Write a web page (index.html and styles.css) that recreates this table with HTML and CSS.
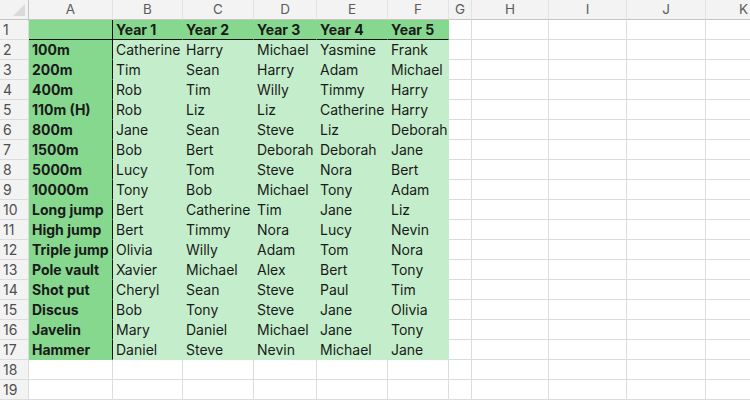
FILE: index.html
```html
<!DOCTYPE html>
<html>
<head>
<meta charset="utf-8">
<link rel="stylesheet" href="styles.css">
</head>
<body>
<table class="sheet">
<colgroup>
<col class="c-rh"><col class="c-a"><col class="c-b"><col class="c-c"><col class="c-d"><col class="c-e"><col class="c-f"><col class="c-g"><col class="c-h"><col class="c-i"><col class="c-j"><col class="c-k">
</colgroup>
<thead>
<tr class="colhead"><th class="corner"><span class="tri"></span></th><th>A</th><th>B</th><th>C</th><th>D</th><th>E</th><th>F</th><th>G</th><th>H</th><th>I</th><th>J</th><th>K</th></tr>
</thead>
<tbody>
<tr><th>1</th><td class="ev hd"></td><td class="hd top">Year 1</td><td class="hd top">Year 2</td><td class="hd top">Year 3</td><td class="hd top">Year 4</td><td class="hd top">Year 5</td><td></td><td></td><td></td><td></td><td></td></tr>
<tr><th>2</th><td class="ev">100m</td><td class="d">Catherine</td><td class="d">Harry</td><td class="d">Michael</td><td class="d">Yasmine</td><td class="d">Frank</td><td></td><td></td><td></td><td></td><td></td></tr>
<tr><th>3</th><td class="ev">200m</td><td class="d">Tim</td><td class="d">Sean</td><td class="d">Harry</td><td class="d">Adam</td><td class="d">Michael</td><td></td><td></td><td></td><td></td><td></td></tr>
<tr><th>4</th><td class="ev">400m</td><td class="d">Rob</td><td class="d">Tim</td><td class="d">Willy</td><td class="d">Timmy</td><td class="d">Harry</td><td></td><td></td><td></td><td></td><td></td></tr>
<tr><th>5</th><td class="ev">110m (H)</td><td class="d">Rob</td><td class="d">Liz</td><td class="d">Liz</td><td class="d">Catherine</td><td class="d">Harry</td><td></td><td></td><td></td><td></td><td></td></tr>
<tr><th>6</th><td class="ev">800m</td><td class="d">Jane</td><td class="d">Sean</td><td class="d">Steve</td><td class="d">Liz</td><td class="d">Deborah</td><td></td><td></td><td></td><td></td><td></td></tr>
<tr><th>7</th><td class="ev">1500m</td><td class="d">Bob</td><td class="d">Bert</td><td class="d">Deborah</td><td class="d">Deborah</td><td class="d">Jane</td><td></td><td></td><td></td><td></td><td></td></tr>
<tr><th>8</th><td class="ev">5000m</td><td class="d">Lucy</td><td class="d">Tom</td><td class="d">Steve</td><td class="d">Nora</td><td class="d">Bert</td><td></td><td></td><td></td><td></td><td></td></tr>
<tr><th>9</th><td class="ev">10000m</td><td class="d">Tony</td><td class="d">Bob</td><td class="d">Michael</td><td class="d">Tony</td><td class="d">Adam</td><td></td><td></td><td></td><td></td><td></td></tr>
<tr><th>10</th><td class="ev">Long jump</td><td class="d">Bert</td><td class="d">Catherine</td><td class="d">Tim</td><td class="d">Jane</td><td class="d">Liz</td><td></td><td></td><td></td><td></td><td></td></tr>
<tr><th>11</th><td class="ev">High jump</td><td class="d">Bert</td><td class="d">Timmy</td><td class="d">Nora</td><td class="d">Lucy</td><td class="d">Nevin</td><td></td><td></td><td></td><td></td><td></td></tr>
<tr><th>12</th><td class="ev">Triple jump</td><td class="d">Olivia</td><td class="d">Willy</td><td class="d">Adam</td><td class="d">Tom</td><td class="d">Nora</td><td></td><td></td><td></td><td></td><td></td></tr>
<tr><th>13</th><td class="ev">Pole vault</td><td class="d">Xavier</td><td class="d">Michael</td><td class="d">Alex</td><td class="d">Bert</td><td class="d">Tony</td><td></td><td></td><td></td><td></td><td></td></tr>
<tr><th>14</th><td class="ev">Shot put</td><td class="d">Cheryl</td><td class="d">Sean</td><td class="d">Steve</td><td class="d">Paul</td><td class="d">Tim</td><td></td><td></td><td></td><td></td><td></td></tr>
<tr><th>15</th><td class="ev">Discus</td><td class="d">Bob</td><td class="d">Tony</td><td class="d">Steve</td><td class="d">Jane</td><td class="d">Olivia</td><td></td><td></td><td></td><td></td><td></td></tr>
<tr><th>16</th><td class="ev">Javelin</td><td class="d">Mary</td><td class="d">Daniel</td><td class="d">Michael</td><td class="d">Jane</td><td class="d">Tony</td><td></td><td></td><td></td><td></td><td></td></tr>
<tr><th>17</th><td class="ev">Hammer</td><td class="d">Daniel</td><td class="d">Steve</td><td class="d">Nevin</td><td class="d">Michael</td><td class="d">Jane</td><td></td><td></td><td></td><td></td><td></td></tr>
<tr><th>18</th><td></td><td></td><td></td><td></td><td></td><td></td><td></td><td></td><td></td><td></td><td></td></tr>
<tr><th>19</th><td></td><td></td><td></td><td></td><td></td><td></td><td></td><td></td><td></td><td></td><td></td></tr>
</tbody>
</table>
</body>
</html>
```
FILE: styles.css
```css
html, body {
  margin: 0;
  padding: 0;
  background: #ffffff;
  overflow: hidden;
}
.sheet {
  table-layout: fixed;
  border-collapse: separate;
  border-spacing: 0;
  width: 782px;
  font-family: Inter, "Noto Sans", sans-serif;
  font-size: 14px;
  color: #1a1a1a;
}
.c-rh { width: 29px; }
.c-a { width: 84px; }
.c-b { width: 70px; }
.c-c { width: 71px; }
.c-d { width: 63px; }
.c-e { width: 71px; }
.c-f { width: 61px; }
.c-g { width: 23px; }
.c-h { width: 77px; }
.c-i { width: 78px; }
.c-j { width: 79px; }
.c-k { width: 76px; }
.sheet th, .sheet td {
  box-sizing: border-box;
  height: 20px;
  line-height: 19px;
  padding: 0 3px;
  white-space: nowrap;
  overflow: hidden;
  border-right: 1px solid #dcdcdc;
  border-bottom: 1px solid #dcdcdc;
  vertical-align: bottom;
  text-align: left;
}
.colhead th {
  background: #f3f3f3;
  color: #5c5c5c;
  font-size: 13.5px;
  font-weight: normal;
  text-align: center;
  border-right: 1px solid #e2e2e2;
  border-bottom: 1px solid #c4c4c4;
}
.colhead th.corner {
  position: relative;
  border-right: 1px solid #c4c4c4;
}
.tri {
  position: absolute;
  right: 3px;
  bottom: 3px;
  width: 0;
  height: 0;
  border-left: 12px solid transparent;
  border-bottom: 12px solid #dadada;
}
tbody th {
  background: #f3f3f3;
  color: #4f4f4f;
  font-weight: normal;
  text-align: center;
  padding: 0;
  border-right: 1px solid #c4c4c4;
  border-bottom: 1px solid #e2e2e2;
}
td.ev {
  background: #85d88e;
  border-right: 1px solid #111111;
  border-bottom: 1px solid #85d88e;
  font-weight: bold;
}
td.hd {
  background: #85d88e;
  font-weight: bold;
  border-right: 1px solid #85d88e;
  border-bottom: 1px solid #111111;
}
td.ev.hd {
  border-right: 1px solid #111111;
  border-bottom: 1px solid #111111;
}
td.d {
  background: #c4eecb;
  border-right: 1px solid #c4eecb;
  border-bottom: 1px solid #c4eecb;
}
```
